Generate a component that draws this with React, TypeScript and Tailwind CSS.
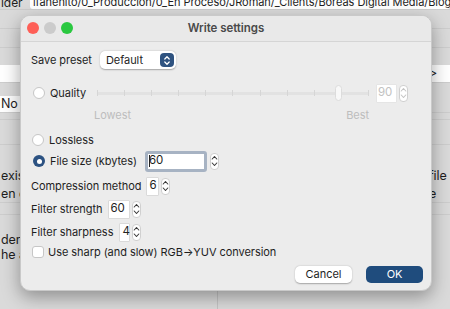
import React from "react";

function Stepper({ disabled = false }: { disabled?: boolean }) {
  const c = disabled ? "#c4c4c4" : "#3a3a3a";
  return (
    <div className="flex h-[17px] w-[9px] flex-col items-center justify-center rounded-[4px] border border-[#d0d0d0] bg-white">
      <svg width="7" height="14" viewBox="0 0 7 14">
        <path d="M1.2 5 L3.5 2.5 L5.8 5" fill="none" stroke={c} strokeWidth="1.1" strokeLinecap="round" strokeLinejoin="round" />
        <path d="M1.2 9 L3.5 11.5 L5.8 9" fill="none" stroke={c} strokeWidth="1.1" strokeLinecap="round" strokeLinejoin="round" />
      </svg>
    </div>
  );
}

function NumField({ value, w }: { value: string; w: string }) {
  return (
    <div className="flex items-center gap-[3px]">
      <div className={`flex h-[17px] items-center bg-white pl-[2px] text-[11.5px] text-[#222] shadow-[0_0_0_0.5px_#c8c8c8] ${w}`}>
        {value}
      </div>
      <Stepper />
    </div>
  );
}

function Radio({ checked = false }: { checked?: boolean }) {
  if (checked) {
    return (
      <div className="flex h-[12px] w-[12px] items-center justify-center rounded-full bg-[#2c5282]">
        <div className="h-[5px] w-[5px] rounded-full bg-white" />
      </div>
    );
  }
  return <div className="h-[12px] w-[12px] rounded-full border border-[#c6c6c6] bg-white" />;
}

function BgRow({ h, left, right, whiteL = false, whiteR = false, border = true }: { h: string; left?: string; right?: string; whiteL?: boolean; whiteR?: boolean; border?: boolean }) {
  return (
    <div className={`flex items-center justify-between ${h} ${border ? "border-b border-[#cdcdcd]" : ""}`}>
      <div className={`flex h-full w-[22px] items-center whitespace-nowrap pl-[1px] ${whiteL ? "bg-white" : ""}`}>{left}</div>
      <div className={`flex h-full w-[23px] items-center whitespace-nowrap pl-[2px] ${whiteR ? "bg-white" : ""}`}>{right}</div>
    </div>
  );
}

export default function App() {
  const ticks = Array.from({ length: 11 });
  return (
    <div
      className="relative h-[309px] w-[450px] overflow-hidden bg-[#dadada] text-[11px] tracking-[-0.05px] text-[#1e1e1e]"
      style={{ fontFamily: "Inter, 'Noto Sans', sans-serif" }}
    >
      {/* background app */}
      <div className="flex flex-col text-[12.5px]">
        <div className="flex h-[10px] items-end border-b border-[#cdcdcd]">
          <div className="w-[30px] pl-[1px] text-[12px] leading-[12px]">lder</div>
          <div className="flex h-[10px] flex-1 items-end overflow-hidden whitespace-nowrap rounded-b-[3px] bg-white pl-[3px] text-[11px] leading-[13px]">
            lfahenito/0_Produccion/0_En Proceso/JRoman/_Clients/Boreas Digital Media/Blog/L
          </div>
        </div>
        <BgRow h="h-[19px]" />
        <BgRow h="h-[19px]" />
        <BgRow h="h-[17px]" border={false} />
        <BgRow h="h-[18px]" whiteL whiteR right=">" />
        <BgRow h="h-[13px]" border={false} />
        <BgRow h="h-[17px]" whiteL left="No" />
        <BgRow h="h-[7px]" />
        <BgRow h="h-[25px]" />
        <BgRow h="h-[21px]" border={false} />
        <BgRow h="h-[20px]" border={false} left="exist" right="file" />
        <BgRow h="h-[17px]" left="en er" right="e" />
        <BgRow h="h-[12px]" />
        <BgRow h="h-[17px]" border={false} />
        <BgRow h="h-[16px]" border={false} left="der" />
        <BgRow h="h-[14px]" border={false} left="he a" />
        <div className="flex h-[50px]">
          <div className="w-[218px] border-r border-[#c4c4c4]" />
        </div>
      </div>

      {/* dialog window */}
      <div className="absolute left-[20px] top-[15px] flex h-[276px] w-[412px] flex-col overflow-hidden rounded-[10px] border border-[#c9c9c9] bg-[#ececec] shadow-[0_6px_18px_rgba(0,0,0,0.35)]">
        <div className="relative flex h-[26px] shrink-0 items-center justify-center border-b border-[#d5d5d5] bg-[#e9e9e9]">
          <div className="absolute left-[6px] top-[6px] flex gap-[5px]">
            <div className="h-[12px] w-[12px] rounded-full bg-[#fe5f57]" />
            <div className="h-[12px] w-[12px] rounded-full bg-[#cbcbcb]" />
            <div className="h-[12px] w-[12px] rounded-full bg-[#2ac840]" />
          </div>
          <div className="text-[11.5px] font-semibold text-[#4a4a4a]">Write settings</div>
        </div>

        <div className="flex flex-col pl-[10px] pr-[8px]">
          {/* save preset */}
          <div className="mt-[9px] flex h-[18px] items-center gap-[8px]">
            <span>Save preset</span>
            <div className="flex h-[18px] w-[76px] items-center justify-between rounded-[5px] bg-white pl-[6px] pr-[2px] shadow-[0_0.5px_1.5px_rgba(0,0,0,0.3)]">
              <span>Default</span>
              <div className="flex h-[14px] w-[14px] items-center justify-center rounded-[4px] bg-[#2f5380]">
                <svg width="8" height="11" viewBox="0 0 8 11">
                  <path d="M1.8 4 L4 1.8 L6.2 4" fill="none" stroke="white" strokeWidth="1.3" strokeLinecap="round" strokeLinejoin="round" />
                  <path d="M1.8 7 L4 9.2 L6.2 7" fill="none" stroke="white" strokeWidth="1.3" strokeLinecap="round" strokeLinejoin="round" />
                </svg>
              </div>
            </div>
          </div>

          {/* quality */}
          <div className="mt-[15px] flex h-[18px] items-center">
            <div className="ml-[2px]"><Radio /></div>
            <span className="ml-[5px] w-[47px]">Quality</span>
            <div className="relative flex h-[18px] w-[272px] items-center">
              <div className="absolute left-0 right-0 top-[8px] h-[3px] rounded-full bg-[#e2e2e2]" />
              <div className="absolute left-0 right-0 top-[6px] flex justify-between">
                {ticks.map((_, i) => (
                  <div key={i} className="h-[6px] w-[1px] bg-[#d6d6d6]" />
                ))}
              </div>
              <div className="absolute left-[238px] top-[1px] h-[16px] w-[7px] rounded-[4px] border border-[#dcdcdc] bg-[#f8f8f8]" />
            </div>
            <div className="ml-[8px] flex items-center gap-[3px]">
              <div className="flex h-[17px] w-[19px] items-center bg-white pl-[1px] text-[11.5px] text-[#c2c2c2] shadow-[0_0_0_0.5px_#dedede]">90</div>
              <Stepper disabled />
            </div>
          </div>

          <div className="mt-[6px] flex h-[14px] w-[338px] items-center justify-between pl-[63px] text-[#bdbdbd]">
            <span>Lowest</span>
            <span>Best</span>
          </div>

          {/* lossless */}
          <div className="mt-[10px] flex h-[16px] items-center">
            <div className="ml-[1px]"><Radio /></div>
            <span className="ml-[5px]">Lossless</span>
          </div>

          {/* file size */}
          <div className="mt-[3px] flex h-[20px] items-center">
            <div className="ml-[2px]"><Radio checked /></div>
            <span className="ml-[5px]">File size (kbytes)</span>
            <div className="ml-[8px] flex items-center gap-[3px]">
              <div className="flex h-[21px] w-[62px] items-center rounded-[3px] border-[3px] border-[#a7b3c3] bg-white pl-[1px] text-[11.5px]">
                <span className="mr-[-1px] inline-block h-[12px] w-[1px] bg-[#222]" />
                <span>60</span>
              </div>
              <Stepper />
            </div>
          </div>

          {/* compression */}
          <div className="mt-[6px] flex h-[18px] items-center gap-[6px]">
            <span>Compression method</span>
            <NumField value="6" w="w-[11px]" />
          </div>

          <div className="mt-[5px] flex h-[18px] items-center gap-[6px]">
            <span>Filter strength</span>
            <NumField value="60" w="w-[20px]" />
          </div>

          <div className="mt-[5px] flex h-[18px] items-center gap-[7px]">
            <span>Filter sharpness</span>
            <NumField value="4" w="w-[9px]" />
          </div>

          <div className="mt-[3px] flex h-[16px] items-center">
            <div className="ml-[1px] h-[12px] w-[12px] rounded-[3px] border border-[#c6c6c6] bg-white" />
            <span className="ml-[4px]">Use sharp (and slow) RGB→YUV conversion</span>
          </div>

          <div className="mt-[6px] flex items-center justify-end gap-[14px]">
            <div className="flex h-[17px] w-[57px] items-center justify-center rounded-[5px] bg-white shadow-[0_0.5px_1.5px_rgba(0,0,0,0.3)]">Cancel</div>
            <div className="flex h-[17px] w-[57px] items-center justify-center rounded-[5px] bg-[#1f4c7d] text-white">OK</div>
          </div>
        </div>
      </div>
    </div>
  );
}
